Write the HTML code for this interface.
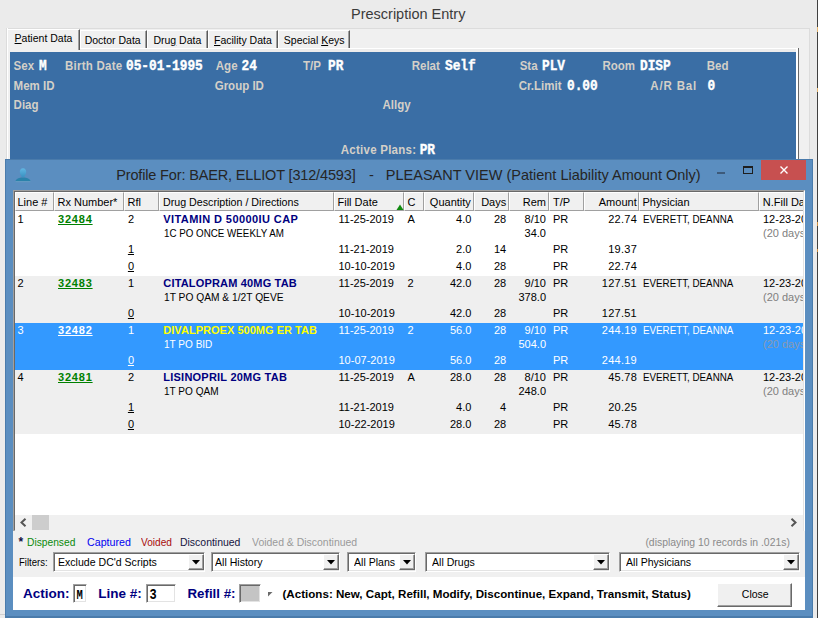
<!DOCTYPE html><html><head><meta charset="utf-8"><style>
html,body{margin:0;padding:0;}
body{width:818px;height:618px;overflow:hidden;position:relative;background:#ebebeb;font-family:"Liberation Sans",sans-serif;}
div{box-sizing:border-box;}
u{text-decoration:underline;text-underline-offset:1px;}
</style></head><body>
<div style="position:absolute;left:351px;top:7.43px;font-family:'Liberation Sans', sans-serif;font-size:14.5px;line-height:14.5px;color:#3b3b3b;font-weight:400;white-space:pre;">Prescription Entry</div>
<div style="position:absolute;left:817px;top:0px;width:1px;height:618px;background:#404040;"></div>
<div style="position:absolute;left:817px;top:27px;width:1px;height:5px;background:#e8b870;"></div>
<div style="position:absolute;left:817px;top:88px;width:1px;height:4px;background:#e8b870;"></div>
<div style="position:absolute;left:817px;top:222px;width:1px;height:4px;background:#d09040;"></div>
<div style="position:absolute;left:817px;top:249px;width:1px;height:3px;background:#d09040;"></div>
<div style="position:absolute;left:7px;top:28px;width:803px;height:590px;background:#f0f0f0;border-top:1px solid #dcdcdc;border-right:1px solid #dcdcdc;"></div>
<div style="position:absolute;left:6px;top:28px;width:2px;height:590px;background:#f0f0f0;border-left:1px solid #dcdcdc;border-right:1px solid #fff;"></div>
<div style="position:absolute;left:80px;top:48px;width:718px;height:1px;background:#ffffff;"></div>
<div style="position:absolute;left:80px;top:30px;width:67px;height:18px;background:#f0f0f0;border-left:1px solid #fff;border-top:1px solid #fff;border-right:1px solid #5a5a5a;box-shadow:inset -1px 0 0 #a0a0a0;"></div>
<div style="position:absolute;left:84.7px;top:35.11px;font-family:'Liberation Sans', sans-serif;font-size:10.5px;line-height:10.5px;color:#000;font-weight:400;white-space:pre;">Doctor Data</div>
<div style="position:absolute;left:147px;top:30px;width:61px;height:18px;background:#f0f0f0;border-left:1px solid #fff;border-top:1px solid #fff;border-right:1px solid #5a5a5a;box-shadow:inset -1px 0 0 #a0a0a0;"></div>
<div style="position:absolute;left:153.4px;top:35.11px;font-family:'Liberation Sans', sans-serif;font-size:10.5px;line-height:10.5px;color:#000;font-weight:400;white-space:pre;">Dru<u>g</u> Data</div>
<div style="position:absolute;left:208px;top:30px;width:70px;height:18px;background:#f0f0f0;border-left:1px solid #fff;border-top:1px solid #fff;border-right:1px solid #5a5a5a;box-shadow:inset -1px 0 0 #a0a0a0;"></div>
<div style="position:absolute;left:214px;top:35.11px;font-family:'Liberation Sans', sans-serif;font-size:10.5px;line-height:10.5px;color:#000;font-weight:400;white-space:pre;"><u>F</u>acility Data</div>
<div style="position:absolute;left:278px;top:30px;width:72px;height:18px;background:#f0f0f0;border-left:1px solid #fff;border-top:1px solid #fff;border-right:1px solid #5a5a5a;box-shadow:inset -1px 0 0 #a0a0a0;"></div>
<div style="position:absolute;left:283.8px;top:35.11px;font-family:'Liberation Sans', sans-serif;font-size:10.5px;line-height:10.5px;color:#000;font-weight:400;white-space:pre;">Special <u>K</u>eys</div>
<div style="position:absolute;left:7px;top:29px;width:73px;height:21px;background:#f0f0f0;border-left:1px solid #fff;border-top:1px solid #fff;border-right:1px solid #5a5a5a;box-shadow:inset -1px 0 0 #a0a0a0;"></div>
<div style="position:absolute;left:14.6px;top:32.91px;font-family:'Liberation Sans', sans-serif;font-size:10.5px;line-height:10.5px;color:#000;font-weight:400;white-space:pre;"><u>P</u>atient Data</div>
<div style="position:absolute;left:10px;top:52px;width:786px;height:120px;background:#3a6ea5;"></div>
<div style="position:absolute;left:80px;top:49px;width:718px;height:3px;background:#ececec;"></div>
<div style="position:absolute;left:796px;top:49px;width:2px;height:120px;background:#ffffff;"></div>
<div style="position:absolute;left:798px;top:48px;width:1px;height:120px;background:#696969;"></div>
<div style="position:absolute;left:13.6px;top:60.97px;font-family:'Liberation Sans', sans-serif;font-size:11.5px;line-height:11.5px;color:#d4d0c8;font-weight:700;white-space:pre;transform:scale(1,1.1);transform-origin:left 84.7%;">Sex</div>
<div style="position:absolute;left:39px;top:61.17px;font-family:'Liberation Mono', monospace;font-size:12.8px;line-height:12.8px;color:#fff;font-weight:700;white-space:pre;transform:scale(1,1.1);transform-origin:left 69.0%;-webkit-text-stroke:0.35px #fff;">M</div>
<div style="position:absolute;left:65px;top:60.97px;font-family:'Liberation Sans', sans-serif;font-size:11.5px;line-height:11.5px;color:#d4d0c8;font-weight:700;white-space:pre;letter-spacing:0.25px;transform:scale(1,1.1);transform-origin:left 84.7%;">Birth Date</div>
<div style="position:absolute;left:126px;top:61.17px;font-family:'Liberation Mono', monospace;font-size:12.8px;line-height:12.8px;color:#fff;font-weight:700;white-space:pre;transform:scale(1,1.1);transform-origin:left 69.0%;-webkit-text-stroke:0.35px #fff;">05-01-1995</div>
<div style="position:absolute;left:215.8px;top:60.97px;font-family:'Liberation Sans', sans-serif;font-size:11.5px;line-height:11.5px;color:#d4d0c8;font-weight:700;white-space:pre;transform:scale(1,1.1);transform-origin:left 84.7%;">Age</div>
<div style="position:absolute;left:241.5px;top:61.17px;font-family:'Liberation Mono', monospace;font-size:12.8px;line-height:12.8px;color:#fff;font-weight:700;white-space:pre;transform:scale(1,1.1);transform-origin:left 69.0%;-webkit-text-stroke:0.35px #fff;">24</div>
<div style="position:absolute;left:303px;top:60.97px;font-family:'Liberation Sans', sans-serif;font-size:11.5px;line-height:11.5px;color:#d4d0c8;font-weight:700;white-space:pre;transform:scale(1,1.1);transform-origin:left 84.7%;">T/P</div>
<div style="position:absolute;left:328px;top:61.17px;font-family:'Liberation Mono', monospace;font-size:12.8px;line-height:12.8px;color:#fff;font-weight:700;white-space:pre;transform:scale(1,1.1);transform-origin:left 69.0%;-webkit-text-stroke:0.35px #fff;">PR</div>
<div style="position:absolute;left:411.7px;top:60.97px;font-family:'Liberation Sans', sans-serif;font-size:11.5px;line-height:11.5px;color:#d4d0c8;font-weight:700;white-space:pre;transform:scale(1,1.1);transform-origin:left 84.7%;">Relat</div>
<div style="position:absolute;left:445px;top:61.17px;font-family:'Liberation Mono', monospace;font-size:12.8px;line-height:12.8px;color:#fff;font-weight:700;white-space:pre;transform:scale(1,1.1);transform-origin:left 69.0%;-webkit-text-stroke:0.35px #fff;">Self</div>
<div style="position:absolute;left:519.7px;top:60.97px;font-family:'Liberation Sans', sans-serif;font-size:11.5px;line-height:11.5px;color:#d4d0c8;font-weight:700;white-space:pre;transform:scale(1,1.1);transform-origin:left 84.7%;">Sta</div>
<div style="position:absolute;left:542px;top:61.17px;font-family:'Liberation Mono', monospace;font-size:12.8px;line-height:12.8px;color:#fff;font-weight:700;white-space:pre;transform:scale(1,1.1);transform-origin:left 69.0%;-webkit-text-stroke:0.35px #fff;">PLV</div>
<div style="position:absolute;left:602.5px;top:60.97px;font-family:'Liberation Sans', sans-serif;font-size:11.5px;line-height:11.5px;color:#d4d0c8;font-weight:700;white-space:pre;transform:scale(1,1.1);transform-origin:left 84.7%;">Room</div>
<div style="position:absolute;left:640px;top:61.17px;font-family:'Liberation Mono', monospace;font-size:12.8px;line-height:12.8px;color:#fff;font-weight:700;white-space:pre;transform:scale(1,1.1);transform-origin:left 69.0%;-webkit-text-stroke:0.35px #fff;">DISP</div>
<div style="position:absolute;left:706.7px;top:60.97px;font-family:'Liberation Sans', sans-serif;font-size:11.5px;line-height:11.5px;color:#d4d0c8;font-weight:700;white-space:pre;transform:scale(1,1.1);transform-origin:left 84.7%;">Bed</div>
<div style="position:absolute;left:13.6px;top:81.27px;font-family:'Liberation Sans', sans-serif;font-size:11.5px;line-height:11.5px;color:#d4d0c8;font-weight:700;white-space:pre;transform:scale(1,1.1);transform-origin:left 84.7%;">Mem ID</div>
<div style="position:absolute;left:214.7px;top:81.27px;font-family:'Liberation Sans', sans-serif;font-size:11.5px;line-height:11.5px;color:#d4d0c8;font-weight:700;white-space:pre;transform:scale(1,1.1);transform-origin:left 84.7%;">Group ID</div>
<div style="position:absolute;left:518.7px;top:81.27px;font-family:'Liberation Sans', sans-serif;font-size:11.5px;line-height:11.5px;color:#d4d0c8;font-weight:700;white-space:pre;transform:scale(1,1.1);transform-origin:left 84.7%;">Cr.Limit</div>
<div style="position:absolute;left:567px;top:81.47px;font-family:'Liberation Mono', monospace;font-size:12.8px;line-height:12.8px;color:#fff;font-weight:700;white-space:pre;transform:scale(1,1.1);transform-origin:left 69.0%;-webkit-text-stroke:0.35px #fff;">0.00</div>
<div style="position:absolute;left:650.3px;top:81.27px;font-family:'Liberation Sans', sans-serif;font-size:11.5px;line-height:11.5px;color:#d4d0c8;font-weight:700;white-space:pre;letter-spacing:0.85px;transform:scale(1,1.1);transform-origin:left 84.7%;">A/R Bal</div>
<div style="position:absolute;left:707.5px;top:81.47px;font-family:'Liberation Mono', monospace;font-size:12.8px;line-height:12.8px;color:#fff;font-weight:700;white-space:pre;transform:scale(1,1.1);transform-origin:left 69.0%;-webkit-text-stroke:0.35px #fff;">0</div>
<div style="position:absolute;left:13.6px;top:99.97px;font-family:'Liberation Sans', sans-serif;font-size:11.5px;line-height:11.5px;color:#d4d0c8;font-weight:700;white-space:pre;transform:scale(1,1.1);transform-origin:left 84.7%;">Diag</div>
<div style="position:absolute;left:382.5px;top:99.97px;font-family:'Liberation Sans', sans-serif;font-size:11.5px;line-height:11.5px;color:#d4d0c8;font-weight:700;white-space:pre;transform:scale(1,1.1);transform-origin:left 84.7%;">Allgy</div>
<div style="position:absolute;left:340.8px;top:145.47px;font-family:'Liberation Sans', sans-serif;font-size:11.5px;line-height:11.5px;color:#d4d0c8;font-weight:700;white-space:pre;letter-spacing:0.25px;transform:scale(1,1.1);transform-origin:left 84.7%;">Active Plans:</div>
<div style="position:absolute;left:419.7px;top:145.37px;font-family:'Liberation Mono', monospace;font-size:12.8px;line-height:12.8px;color:#fff;font-weight:700;white-space:pre;transform:scale(1,1.1);transform-origin:left 69.0%;-webkit-text-stroke:0.35px #fff;">PR</div>
<div style="position:absolute;left:5px;top:159px;width:808px;height:459px;background:#5b8ec0;border:1px solid #4a7bab;border-bottom:2px solid #4a7bab;"></div>
<svg style="position:absolute;left:14px;top:166px" width="18" height="17" viewBox="0 0 18 17"><defs><linearGradient id="hg" x1="0" y1="0" x2="0" y2="1"><stop offset="0" stop-color="#62b6e2"/><stop offset="1" stop-color="#3a92c2"/></linearGradient></defs><path d="M9 2.2 C11.3 2.2 12.2 4 12.2 5.8 C12.2 8 10.8 9.6 10.3 11 L7.7 11 C7.2 9.6 5.8 8 5.8 5.8 C5.8 4 6.7 2.2 9 2.2 Z" fill="url(#hg)"/><path d="M1.3 15.3 C2 12.6 5 11.6 9 11.4 C13 11.6 16 12.6 16.7 15.3 Z" fill="#2a82aa"/><rect x="1.5" y="15.3" width="15" height="0.8" fill="#7aa6c8" opacity="0.7"/></svg>
<div style="position:absolute;left:116.2px;top:167.73px;font-family:'Liberation Sans', sans-serif;font-size:14.5px;line-height:14.5px;color:#252525;font-weight:400;white-space:pre;letter-spacing:-0.15px;">Profile For: BAER, ELLIOT [312/4593]</div>
<div style="position:absolute;left:369px;top:167.73px;font-family:'Liberation Sans', sans-serif;font-size:14.5px;line-height:14.5px;color:#252525;font-weight:400;white-space:pre;">-</div>
<div style="position:absolute;left:385.8px;top:167.73px;font-family:'Liberation Sans', sans-serif;font-size:14.5px;line-height:14.5px;color:#252525;font-weight:400;white-space:pre;">PLEASANT VIEW (Patient Liability Amount Only)</div>
<div style="position:absolute;left:717px;top:172px;width:8px;height:2px;background:#3d5a7a;"></div>
<div style="position:absolute;left:743px;top:166px;width:10px;height:8px;background:transparent;border:1px solid #1e1e1e;border-top:2px solid #1e1e1e;"></div>
<div style="position:absolute;left:761px;top:160px;width:45px;height:20px;background:#c75050;"></div>
<svg style="position:absolute;left:779px;top:165px" width="10" height="10" viewBox="0 0 10 10"><path d="M1.5 1.5 L8.5 8.5 M8.5 1.5 L1.5 8.5" stroke="#fff" stroke-width="1.4"/></svg>
<div style="position:absolute;left:13px;top:190px;width:792px;height:420px;background:#ffffff;"></div>
<div style="position:absolute;left:13px;top:190px;width:792px;height:342px;background:transparent;border-top:1px solid #a0a0a0;border-left:1px solid #a0a0a0;border-right:1px solid #fff;border-bottom:1px solid #fff;"></div>
<div style="position:absolute;left:14px;top:191px;width:790px;height:340px;background:transparent;border-top:1px solid #696969;border-left:1px solid #696969;border-right:1px solid #e3e3e3;border-bottom:1px solid #e3e3e3;"></div>
<div style="position:absolute;left:15px;top:192px;width:39px;height:19px;background:#f0f0f0;border-left:1px solid #fff;border-top:1px solid #fff;border-right:1px solid #a0a0a0;border-bottom:1px solid #a0a0a0;"></div>
<div style="position:absolute;left:54px;top:192px;width:70px;height:19px;background:#f0f0f0;border-left:1px solid #fff;border-top:1px solid #fff;border-right:1px solid #a0a0a0;border-bottom:1px solid #a0a0a0;"></div>
<div style="position:absolute;left:124px;top:192px;width:35px;height:19px;background:#f0f0f0;border-left:1px solid #fff;border-top:1px solid #fff;border-right:1px solid #a0a0a0;border-bottom:1px solid #a0a0a0;"></div>
<div style="position:absolute;left:159px;top:192px;width:175px;height:19px;background:#f0f0f0;border-left:1px solid #fff;border-top:1px solid #fff;border-right:1px solid #a0a0a0;border-bottom:1px solid #a0a0a0;"></div>
<div style="position:absolute;left:334px;top:192px;width:70px;height:19px;background:#f0f0f0;border-left:1px solid #fff;border-top:1px solid #fff;border-right:1px solid #a0a0a0;border-bottom:1px solid #a0a0a0;"></div>
<div style="position:absolute;left:404px;top:192px;width:20px;height:19px;background:#f0f0f0;border-left:1px solid #fff;border-top:1px solid #fff;border-right:1px solid #a0a0a0;border-bottom:1px solid #a0a0a0;"></div>
<div style="position:absolute;left:424px;top:192px;width:50px;height:19px;background:#f0f0f0;border-left:1px solid #fff;border-top:1px solid #fff;border-right:1px solid #a0a0a0;border-bottom:1px solid #a0a0a0;"></div>
<div style="position:absolute;left:474px;top:192px;width:35px;height:19px;background:#f0f0f0;border-left:1px solid #fff;border-top:1px solid #fff;border-right:1px solid #a0a0a0;border-bottom:1px solid #a0a0a0;"></div>
<div style="position:absolute;left:509px;top:192px;width:40px;height:19px;background:#f0f0f0;border-left:1px solid #fff;border-top:1px solid #fff;border-right:1px solid #a0a0a0;border-bottom:1px solid #a0a0a0;"></div>
<div style="position:absolute;left:549px;top:192px;width:35px;height:19px;background:#f0f0f0;border-left:1px solid #fff;border-top:1px solid #fff;border-right:1px solid #a0a0a0;border-bottom:1px solid #a0a0a0;"></div>
<div style="position:absolute;left:584px;top:192px;width:55px;height:19px;background:#f0f0f0;border-left:1px solid #fff;border-top:1px solid #fff;border-right:1px solid #a0a0a0;border-bottom:1px solid #a0a0a0;"></div>
<div style="position:absolute;left:639px;top:192px;width:120px;height:19px;background:#f0f0f0;border-left:1px solid #fff;border-top:1px solid #fff;border-right:1px solid #a0a0a0;border-bottom:1px solid #a0a0a0;"></div>
<div style="position:absolute;left:759px;top:192px;width:44px;height:19px;background:#f0f0f0;border-left:1px solid #fff;border-top:1px solid #fff;border-bottom:1px solid #a0a0a0;"></div>
<div style="position:absolute;left:0;top:0;width:818px;height:618px;clip-path:inset(0 15px 0 0)">
<div style="position:absolute;left:17.5px;top:196.69px;font-family:'Liberation Sans', sans-serif;font-size:11px;line-height:11px;color:#000;font-weight:400;white-space:pre;">Line #</div>
<div style="position:absolute;left:57.5px;top:196.69px;font-family:'Liberation Sans', sans-serif;font-size:11px;line-height:11px;color:#000;font-weight:400;white-space:pre;">Rx Number*</div>
<div style="position:absolute;left:127.5px;top:196.69px;font-family:'Liberation Sans', sans-serif;font-size:11px;line-height:11px;color:#000;font-weight:400;white-space:pre;">Rfl</div>
<div style="position:absolute;left:162.5px;top:196.69px;font-family:'Liberation Sans', sans-serif;font-size:11px;line-height:11px;color:#000;font-weight:400;white-space:pre;transform:scale(0.97,1);transform-origin:left 84.7%;">Drug Description / Directions</div>
<div style="position:absolute;left:337.5px;top:196.69px;font-family:'Liberation Sans', sans-serif;font-size:11px;line-height:11px;color:#000;font-weight:400;white-space:pre;">Fill Date</div>
<div style="position:absolute;left:407.5px;top:196.69px;font-family:'Liberation Sans', sans-serif;font-size:11px;line-height:11px;color:#000;font-weight:400;white-space:pre;">C</div>
<div style="position:absolute;right:347.2px;top:196.69px;font-family:'Liberation Sans', sans-serif;font-size:11px;line-height:11px;color:#000;font-weight:400;white-space:pre;">Quantity</div>
<div style="position:absolute;right:311.8px;top:196.69px;font-family:'Liberation Sans', sans-serif;font-size:11px;line-height:11px;color:#000;font-weight:400;white-space:pre;">Days</div>
<div style="position:absolute;right:272px;top:196.69px;font-family:'Liberation Sans', sans-serif;font-size:11px;line-height:11px;color:#000;font-weight:400;white-space:pre;">Rem</div>
<div style="position:absolute;left:553px;top:196.69px;font-family:'Liberation Sans', sans-serif;font-size:11px;line-height:11px;color:#000;font-weight:400;white-space:pre;">T/P</div>
<div style="position:absolute;right:181.29999999999995px;top:196.69px;font-family:'Liberation Sans', sans-serif;font-size:11px;line-height:11px;color:#000;font-weight:400;white-space:pre;">Amount</div>
<div style="position:absolute;left:642.5px;top:196.69px;font-family:'Liberation Sans', sans-serif;font-size:11px;line-height:11px;color:#000;font-weight:400;white-space:pre;">Physician</div>
<div style="position:absolute;left:762.8px;top:196.69px;font-family:'Liberation Sans', sans-serif;font-size:11px;line-height:11px;color:#000;font-weight:400;white-space:pre;">N.Fill Date</div>
</div>
<svg style="position:absolute;left:396px;top:204px" width="8" height="6" viewBox="0 0 8 6"><path d="M0.5 6 L4 0.5 L7.5 6 Z" fill="#108a10"/></svg>
<div style="position:absolute;left:15px;top:211px;width:788px;height:304px;overflow:hidden">
</div>
<div style="position:absolute;left:15px;top:211px;width:788px;height:65px;background:#ffffff;"></div>
<div style="position:absolute;left:17.5px;top:213.69px;font-family:'Liberation Sans', sans-serif;font-size:11px;line-height:11px;color:#000;font-weight:400;white-space:pre;">1</div>
<div style="position:absolute;left:58px;top:213.69px;font-family:'Liberation Sans', sans-serif;font-size:11px;line-height:11px;color:#008000;font-weight:700;white-space:pre;letter-spacing:0.8px;"><u>32484</u></div>
<div style="position:absolute;left:127.9px;top:213.69px;font-family:'Liberation Sans', sans-serif;font-size:11px;line-height:11px;color:#000;font-weight:400;white-space:pre;">2</div>
<div style="position:absolute;left:163.3px;top:213.69px;font-family:'Liberation Sans', sans-serif;font-size:11px;line-height:11px;color:#000080;font-weight:700;white-space:pre;letter-spacing:0.41px;">VITAMIN D 50000IU CAP</div>
<div style="position:absolute;left:163.5px;top:227.69px;font-family:'Liberation Sans', sans-serif;font-size:11px;line-height:11px;color:#000;font-weight:400;white-space:pre;transform:scale(0.89,1);transform-origin:left 84.7%;">1C PO ONCE WEEKLY AM</div>
<div style="position:absolute;left:338.5px;top:213.69px;font-family:'Liberation Sans', sans-serif;font-size:11px;line-height:11px;color:#000;font-weight:400;white-space:pre;">11-25-2019</div>
<div style="position:absolute;left:407.5px;top:213.69px;font-family:'Liberation Sans', sans-serif;font-size:11px;line-height:11px;color:#000;font-weight:400;white-space:pre;">A</div>
<div style="position:absolute;right:346.7px;top:213.69px;font-family:'Liberation Sans', sans-serif;font-size:11px;line-height:11px;color:#000;font-weight:400;white-space:pre;">4.0</div>
<div style="position:absolute;right:311.8px;top:213.69px;font-family:'Liberation Sans', sans-serif;font-size:11px;line-height:11px;color:#000;font-weight:400;white-space:pre;">28</div>
<div style="position:absolute;right:272px;top:213.69px;font-family:'Liberation Sans', sans-serif;font-size:11px;line-height:11px;color:#000;font-weight:400;white-space:pre;">8/10</div>
<div style="position:absolute;right:272px;top:227.69px;font-family:'Liberation Sans', sans-serif;font-size:11px;line-height:11px;color:#000;font-weight:400;white-space:pre;">34.0</div>
<div style="position:absolute;left:553px;top:213.69px;font-family:'Liberation Sans', sans-serif;font-size:11px;line-height:11px;color:#000;font-weight:400;white-space:pre;">PR</div>
<div style="position:absolute;right:181.0px;top:213.69px;font-family:'Liberation Sans', sans-serif;font-size:11px;line-height:11px;color:#000;font-weight:400;white-space:pre;letter-spacing:0.25px;">22.74</div>
<div style="position:absolute;left:642.5px;top:213.69px;font-family:'Liberation Sans', sans-serif;font-size:11px;line-height:11px;color:#000;font-weight:400;white-space:pre;transform:scale(0.89,1);transform-origin:left 84.7%;">EVERETT, DEANNA</div>
<div style="position:absolute;left:759px;top:211px;width:44px;height:65px;overflow:hidden">
<div style="position:absolute;left:4px;top:2.69px;font-size:11px;line-height:11px;white-space:pre;color:#000">12-23-2019</div>
<div style="position:absolute;left:4px;top:16.69px;font-size:11px;line-height:11px;white-space:pre;color:#808080">(20 days)</div>
</div>
<div style="position:absolute;left:127.9px;top:243.69px;font-family:'Liberation Sans', sans-serif;font-size:11px;line-height:11px;color:#000;font-weight:400;white-space:pre;"><u>1</u></div>
<div style="position:absolute;left:338.5px;top:243.69px;font-family:'Liberation Sans', sans-serif;font-size:11px;line-height:11px;color:#000;font-weight:400;white-space:pre;">11-21-2019</div>
<div style="position:absolute;right:346.7px;top:243.69px;font-family:'Liberation Sans', sans-serif;font-size:11px;line-height:11px;color:#000;font-weight:400;white-space:pre;">2.0</div>
<div style="position:absolute;right:311.8px;top:243.69px;font-family:'Liberation Sans', sans-serif;font-size:11px;line-height:11px;color:#000;font-weight:400;white-space:pre;">14</div>
<div style="position:absolute;left:553px;top:243.69px;font-family:'Liberation Sans', sans-serif;font-size:11px;line-height:11px;color:#000;font-weight:400;white-space:pre;">PR</div>
<div style="position:absolute;right:181.0px;top:243.69px;font-family:'Liberation Sans', sans-serif;font-size:11px;line-height:11px;color:#000;font-weight:400;white-space:pre;letter-spacing:0.25px;">19.37</div>
<div style="position:absolute;left:127.9px;top:260.69px;font-family:'Liberation Sans', sans-serif;font-size:11px;line-height:11px;color:#000;font-weight:400;white-space:pre;"><u>0</u></div>
<div style="position:absolute;left:338.5px;top:260.69px;font-family:'Liberation Sans', sans-serif;font-size:11px;line-height:11px;color:#000;font-weight:400;white-space:pre;">10-10-2019</div>
<div style="position:absolute;right:346.7px;top:260.69px;font-family:'Liberation Sans', sans-serif;font-size:11px;line-height:11px;color:#000;font-weight:400;white-space:pre;">4.0</div>
<div style="position:absolute;right:311.8px;top:260.69px;font-family:'Liberation Sans', sans-serif;font-size:11px;line-height:11px;color:#000;font-weight:400;white-space:pre;">28</div>
<div style="position:absolute;left:553px;top:260.69px;font-family:'Liberation Sans', sans-serif;font-size:11px;line-height:11px;color:#000;font-weight:400;white-space:pre;">PR</div>
<div style="position:absolute;right:181.0px;top:260.69px;font-family:'Liberation Sans', sans-serif;font-size:11px;line-height:11px;color:#000;font-weight:400;white-space:pre;letter-spacing:0.25px;">22.74</div>
<div style="position:absolute;left:15px;top:276px;width:788px;height:47px;background:#efefef;"></div>
<div style="position:absolute;left:17.5px;top:277.69px;font-family:'Liberation Sans', sans-serif;font-size:11px;line-height:11px;color:#000;font-weight:400;white-space:pre;">2</div>
<div style="position:absolute;left:58px;top:277.69px;font-family:'Liberation Sans', sans-serif;font-size:11px;line-height:11px;color:#008000;font-weight:700;white-space:pre;letter-spacing:0.8px;"><u>32483</u></div>
<div style="position:absolute;left:127.9px;top:277.69px;font-family:'Liberation Sans', sans-serif;font-size:11px;line-height:11px;color:#000;font-weight:400;white-space:pre;">1</div>
<div style="position:absolute;left:163.3px;top:277.69px;font-family:'Liberation Sans', sans-serif;font-size:11px;line-height:11px;color:#000080;font-weight:700;white-space:pre;letter-spacing:0.17px;">CITALOPRAM 40MG TAB</div>
<div style="position:absolute;left:163.5px;top:291.69px;font-family:'Liberation Sans', sans-serif;font-size:11px;line-height:11px;color:#000;font-weight:400;white-space:pre;transform:scale(0.93,1);transform-origin:left 84.7%;">1T PO QAM &amp; 1/2T QEVE</div>
<div style="position:absolute;left:338.5px;top:277.69px;font-family:'Liberation Sans', sans-serif;font-size:11px;line-height:11px;color:#000;font-weight:400;white-space:pre;">11-25-2019</div>
<div style="position:absolute;left:407.5px;top:277.69px;font-family:'Liberation Sans', sans-serif;font-size:11px;line-height:11px;color:#000;font-weight:400;white-space:pre;">2</div>
<div style="position:absolute;right:346.7px;top:277.69px;font-family:'Liberation Sans', sans-serif;font-size:11px;line-height:11px;color:#000;font-weight:400;white-space:pre;">42.0</div>
<div style="position:absolute;right:311.8px;top:277.69px;font-family:'Liberation Sans', sans-serif;font-size:11px;line-height:11px;color:#000;font-weight:400;white-space:pre;">28</div>
<div style="position:absolute;right:272px;top:277.69px;font-family:'Liberation Sans', sans-serif;font-size:11px;line-height:11px;color:#000;font-weight:400;white-space:pre;">9/10</div>
<div style="position:absolute;right:272px;top:291.69px;font-family:'Liberation Sans', sans-serif;font-size:11px;line-height:11px;color:#000;font-weight:400;white-space:pre;">378.0</div>
<div style="position:absolute;left:553px;top:277.69px;font-family:'Liberation Sans', sans-serif;font-size:11px;line-height:11px;color:#000;font-weight:400;white-space:pre;">PR</div>
<div style="position:absolute;right:181.0px;top:277.69px;font-family:'Liberation Sans', sans-serif;font-size:11px;line-height:11px;color:#000;font-weight:400;white-space:pre;letter-spacing:0.25px;">127.51</div>
<div style="position:absolute;left:642.5px;top:277.69px;font-family:'Liberation Sans', sans-serif;font-size:11px;line-height:11px;color:#000;font-weight:400;white-space:pre;transform:scale(0.89,1);transform-origin:left 84.7%;">EVERETT, DEANNA</div>
<div style="position:absolute;left:759px;top:276px;width:44px;height:47px;overflow:hidden">
<div style="position:absolute;left:4px;top:1.69px;font-size:11px;line-height:11px;white-space:pre;color:#000">12-23-2019</div>
<div style="position:absolute;left:4px;top:15.69px;font-size:11px;line-height:11px;white-space:pre;color:#808080">(20 days)</div>
</div>
<div style="position:absolute;left:127.9px;top:308.19px;font-family:'Liberation Sans', sans-serif;font-size:11px;line-height:11px;color:#000;font-weight:400;white-space:pre;"><u>0</u></div>
<div style="position:absolute;left:338.5px;top:308.19px;font-family:'Liberation Sans', sans-serif;font-size:11px;line-height:11px;color:#000;font-weight:400;white-space:pre;">10-10-2019</div>
<div style="position:absolute;right:346.7px;top:308.19px;font-family:'Liberation Sans', sans-serif;font-size:11px;line-height:11px;color:#000;font-weight:400;white-space:pre;">42.0</div>
<div style="position:absolute;right:311.8px;top:308.19px;font-family:'Liberation Sans', sans-serif;font-size:11px;line-height:11px;color:#000;font-weight:400;white-space:pre;">28</div>
<div style="position:absolute;left:553px;top:308.19px;font-family:'Liberation Sans', sans-serif;font-size:11px;line-height:11px;color:#000;font-weight:400;white-space:pre;">PR</div>
<div style="position:absolute;right:181.0px;top:308.19px;font-family:'Liberation Sans', sans-serif;font-size:11px;line-height:11px;color:#000;font-weight:400;white-space:pre;letter-spacing:0.25px;">127.51</div>
<div style="position:absolute;left:15px;top:323px;width:788px;height:47px;background:#3399ff;"></div>
<div style="position:absolute;left:17.5px;top:324.89px;font-family:'Liberation Sans', sans-serif;font-size:11px;line-height:11px;color:#fff;font-weight:400;white-space:pre;">3</div>
<div style="position:absolute;left:58px;top:324.89px;font-family:'Liberation Sans', sans-serif;font-size:11px;line-height:11px;color:#fff;font-weight:700;white-space:pre;letter-spacing:0.8px;"><u>32482</u></div>
<div style="position:absolute;left:127.9px;top:324.89px;font-family:'Liberation Sans', sans-serif;font-size:11px;line-height:11px;color:#fff;font-weight:400;white-space:pre;">1</div>
<div style="position:absolute;left:163.3px;top:324.89px;font-family:'Liberation Sans', sans-serif;font-size:11px;line-height:11px;color:#ffff00;font-weight:700;white-space:pre;letter-spacing:0.03px;">DIVALPROEX 500MG ER TAB</div>
<div style="position:absolute;left:163.5px;top:338.89px;font-family:'Liberation Sans', sans-serif;font-size:11px;line-height:11px;color:#fff;font-weight:400;white-space:pre;transform:scale(0.913,1);transform-origin:left 84.7%;">1T PO BID</div>
<div style="position:absolute;left:338.5px;top:324.89px;font-family:'Liberation Sans', sans-serif;font-size:11px;line-height:11px;color:#fff;font-weight:400;white-space:pre;">11-25-2019</div>
<div style="position:absolute;left:407.5px;top:324.89px;font-family:'Liberation Sans', sans-serif;font-size:11px;line-height:11px;color:#fff;font-weight:400;white-space:pre;">2</div>
<div style="position:absolute;right:346.7px;top:324.89px;font-family:'Liberation Sans', sans-serif;font-size:11px;line-height:11px;color:#fff;font-weight:400;white-space:pre;">56.0</div>
<div style="position:absolute;right:311.8px;top:324.89px;font-family:'Liberation Sans', sans-serif;font-size:11px;line-height:11px;color:#fff;font-weight:400;white-space:pre;">28</div>
<div style="position:absolute;right:272px;top:324.89px;font-family:'Liberation Sans', sans-serif;font-size:11px;line-height:11px;color:#fff;font-weight:400;white-space:pre;">9/10</div>
<div style="position:absolute;right:272px;top:338.89px;font-family:'Liberation Sans', sans-serif;font-size:11px;line-height:11px;color:#fff;font-weight:400;white-space:pre;">504.0</div>
<div style="position:absolute;left:553px;top:324.89px;font-family:'Liberation Sans', sans-serif;font-size:11px;line-height:11px;color:#fff;font-weight:400;white-space:pre;">PR</div>
<div style="position:absolute;right:181.0px;top:324.89px;font-family:'Liberation Sans', sans-serif;font-size:11px;line-height:11px;color:#fff;font-weight:400;white-space:pre;letter-spacing:0.25px;">244.19</div>
<div style="position:absolute;left:642.5px;top:324.89px;font-family:'Liberation Sans', sans-serif;font-size:11px;line-height:11px;color:#fff;font-weight:400;white-space:pre;transform:scale(0.89,1);transform-origin:left 84.7%;">EVERETT, DEANNA</div>
<div style="position:absolute;left:759px;top:323px;width:44px;height:47px;overflow:hidden">
<div style="position:absolute;left:4px;top:1.89px;font-size:11px;line-height:11px;white-space:pre;color:#fff">12-23-2019</div>
<div style="position:absolute;left:4px;top:15.89px;font-size:11px;line-height:11px;white-space:pre;color:#8a9ab0">(20 days)</div>
</div>
<div style="position:absolute;left:127.9px;top:355.39px;font-family:'Liberation Sans', sans-serif;font-size:11px;line-height:11px;color:#fff;font-weight:400;white-space:pre;"><u>0</u></div>
<div style="position:absolute;left:338.5px;top:355.39px;font-family:'Liberation Sans', sans-serif;font-size:11px;line-height:11px;color:#fff;font-weight:400;white-space:pre;">10-07-2019</div>
<div style="position:absolute;right:346.7px;top:355.39px;font-family:'Liberation Sans', sans-serif;font-size:11px;line-height:11px;color:#fff;font-weight:400;white-space:pre;">56.0</div>
<div style="position:absolute;right:311.8px;top:355.39px;font-family:'Liberation Sans', sans-serif;font-size:11px;line-height:11px;color:#fff;font-weight:400;white-space:pre;">28</div>
<div style="position:absolute;left:553px;top:355.39px;font-family:'Liberation Sans', sans-serif;font-size:11px;line-height:11px;color:#fff;font-weight:400;white-space:pre;">PR</div>
<div style="position:absolute;right:181.0px;top:355.39px;font-family:'Liberation Sans', sans-serif;font-size:11px;line-height:11px;color:#fff;font-weight:400;white-space:pre;letter-spacing:0.25px;">244.19</div>
<div style="position:absolute;left:15px;top:370px;width:788px;height:64px;background:#efefef;"></div>
<div style="position:absolute;left:17.5px;top:371.69px;font-family:'Liberation Sans', sans-serif;font-size:11px;line-height:11px;color:#000;font-weight:400;white-space:pre;">4</div>
<div style="position:absolute;left:58px;top:371.69px;font-family:'Liberation Sans', sans-serif;font-size:11px;line-height:11px;color:#008000;font-weight:700;white-space:pre;letter-spacing:0.8px;"><u>32481</u></div>
<div style="position:absolute;left:127.9px;top:371.69px;font-family:'Liberation Sans', sans-serif;font-size:11px;line-height:11px;color:#000;font-weight:400;white-space:pre;">2</div>
<div style="position:absolute;left:163.3px;top:371.69px;font-family:'Liberation Sans', sans-serif;font-size:11px;line-height:11px;color:#000080;font-weight:700;white-space:pre;letter-spacing:0.23px;">LISINOPRIL 20MG TAB</div>
<div style="position:absolute;left:163.5px;top:385.69px;font-family:'Liberation Sans', sans-serif;font-size:11px;line-height:11px;color:#000;font-weight:400;white-space:pre;transform:scale(0.915,1);transform-origin:left 84.7%;">1T PO QAM</div>
<div style="position:absolute;left:338.5px;top:371.69px;font-family:'Liberation Sans', sans-serif;font-size:11px;line-height:11px;color:#000;font-weight:400;white-space:pre;">11-25-2019</div>
<div style="position:absolute;left:407.5px;top:371.69px;font-family:'Liberation Sans', sans-serif;font-size:11px;line-height:11px;color:#000;font-weight:400;white-space:pre;">A</div>
<div style="position:absolute;right:346.7px;top:371.69px;font-family:'Liberation Sans', sans-serif;font-size:11px;line-height:11px;color:#000;font-weight:400;white-space:pre;">28.0</div>
<div style="position:absolute;right:311.8px;top:371.69px;font-family:'Liberation Sans', sans-serif;font-size:11px;line-height:11px;color:#000;font-weight:400;white-space:pre;">28</div>
<div style="position:absolute;right:272px;top:371.69px;font-family:'Liberation Sans', sans-serif;font-size:11px;line-height:11px;color:#000;font-weight:400;white-space:pre;">8/10</div>
<div style="position:absolute;right:272px;top:385.69px;font-family:'Liberation Sans', sans-serif;font-size:11px;line-height:11px;color:#000;font-weight:400;white-space:pre;">248.0</div>
<div style="position:absolute;left:553px;top:371.69px;font-family:'Liberation Sans', sans-serif;font-size:11px;line-height:11px;color:#000;font-weight:400;white-space:pre;">PR</div>
<div style="position:absolute;right:181.0px;top:371.69px;font-family:'Liberation Sans', sans-serif;font-size:11px;line-height:11px;color:#000;font-weight:400;white-space:pre;letter-spacing:0.25px;">45.78</div>
<div style="position:absolute;left:642.5px;top:371.69px;font-family:'Liberation Sans', sans-serif;font-size:11px;line-height:11px;color:#000;font-weight:400;white-space:pre;transform:scale(0.89,1);transform-origin:left 84.7%;">EVERETT, DEANNA</div>
<div style="position:absolute;left:759px;top:370px;width:44px;height:64px;overflow:hidden">
<div style="position:absolute;left:4px;top:1.69px;font-size:11px;line-height:11px;white-space:pre;color:#000">12-23-2019</div>
<div style="position:absolute;left:4px;top:15.69px;font-size:11px;line-height:11px;white-space:pre;color:#808080">(20 days)</div>
</div>
<div style="position:absolute;left:127.9px;top:401.69px;font-family:'Liberation Sans', sans-serif;font-size:11px;line-height:11px;color:#000;font-weight:400;white-space:pre;"><u>1</u></div>
<div style="position:absolute;left:338.5px;top:401.69px;font-family:'Liberation Sans', sans-serif;font-size:11px;line-height:11px;color:#000;font-weight:400;white-space:pre;">11-21-2019</div>
<div style="position:absolute;right:346.7px;top:401.69px;font-family:'Liberation Sans', sans-serif;font-size:11px;line-height:11px;color:#000;font-weight:400;white-space:pre;">4.0</div>
<div style="position:absolute;right:311.8px;top:401.69px;font-family:'Liberation Sans', sans-serif;font-size:11px;line-height:11px;color:#000;font-weight:400;white-space:pre;">4</div>
<div style="position:absolute;left:553px;top:401.69px;font-family:'Liberation Sans', sans-serif;font-size:11px;line-height:11px;color:#000;font-weight:400;white-space:pre;">PR</div>
<div style="position:absolute;right:181.0px;top:401.69px;font-family:'Liberation Sans', sans-serif;font-size:11px;line-height:11px;color:#000;font-weight:400;white-space:pre;letter-spacing:0.25px;">20.25</div>
<div style="position:absolute;left:127.9px;top:418.69px;font-family:'Liberation Sans', sans-serif;font-size:11px;line-height:11px;color:#000;font-weight:400;white-space:pre;"><u>0</u></div>
<div style="position:absolute;left:338.5px;top:418.69px;font-family:'Liberation Sans', sans-serif;font-size:11px;line-height:11px;color:#000;font-weight:400;white-space:pre;">10-22-2019</div>
<div style="position:absolute;right:346.7px;top:418.69px;font-family:'Liberation Sans', sans-serif;font-size:11px;line-height:11px;color:#000;font-weight:400;white-space:pre;">28.0</div>
<div style="position:absolute;right:311.8px;top:418.69px;font-family:'Liberation Sans', sans-serif;font-size:11px;line-height:11px;color:#000;font-weight:400;white-space:pre;">28</div>
<div style="position:absolute;left:553px;top:418.69px;font-family:'Liberation Sans', sans-serif;font-size:11px;line-height:11px;color:#000;font-weight:400;white-space:pre;">PR</div>
<div style="position:absolute;right:181.0px;top:418.69px;font-family:'Liberation Sans', sans-serif;font-size:11px;line-height:11px;color:#000;font-weight:400;white-space:pre;letter-spacing:0.25px;">45.78</div>
<div style="position:absolute;left:15px;top:515px;width:788px;height:16px;background:#f0f0f0;"></div>
<div style="position:absolute;left:32px;top:515px;width:17px;height:15px;background:#cdcdcd;"></div>
<svg style="position:absolute;left:18px;top:517px" width="10" height="11" viewBox="0 0 10 11"><path d="M7.5 1.8 L3.5 5.5 L7.5 9.2" stroke="#555" stroke-width="2" fill="none"/></svg>
<svg style="position:absolute;left:789px;top:517px" width="10" height="11" viewBox="0 0 10 11"><path d="M2.5 1.8 L6.5 5.5 L2.5 9.2" stroke="#555" stroke-width="2" fill="none"/></svg>
<div style="position:absolute;left:13px;top:531px;width:792px;height:46px;background:#f0f0f0;"></div>
<div style="position:absolute;left:18.5px;top:535.84px;font-family:'Liberation Sans', sans-serif;font-size:12px;line-height:12px;color:#101040;font-weight:700;white-space:pre;">*</div>
<div style="position:absolute;left:26.7px;top:537.39px;font-family:'Liberation Sans', sans-serif;font-size:11px;line-height:11px;color:#0a8a0a;font-weight:400;white-space:pre;transform:scale(0.93,1);transform-origin:left 84.7%;">Dispensed</div>
<div style="position:absolute;left:86.7px;top:537.39px;font-family:'Liberation Sans', sans-serif;font-size:11px;line-height:11px;color:#0000f0;font-weight:400;white-space:pre;transform:scale(0.97,1);transform-origin:left 84.7%;">Captured</div>
<div style="position:absolute;left:140.8px;top:537.39px;font-family:'Liberation Sans', sans-serif;font-size:11px;line-height:11px;color:#a80c0c;font-weight:400;white-space:pre;transform:scale(0.92,1);transform-origin:left 84.7%;">Voided</div>
<div style="position:absolute;left:179.7px;top:537.39px;font-family:'Liberation Sans', sans-serif;font-size:11px;line-height:11px;color:#141440;font-weight:400;white-space:pre;transform:scale(0.95,1);transform-origin:left 84.7%;">Discontinued</div>
<div style="position:absolute;left:251.7px;top:537.39px;font-family:'Liberation Sans', sans-serif;font-size:11px;line-height:11px;color:#9a9a9a;font-weight:400;white-space:pre;transform:scale(0.95,1);transform-origin:left 84.7%;">Voided &amp; Discontinued</div>
<div style="position:absolute;right:27.700000000000045px;top:537.39px;font-family:'Liberation Sans', sans-serif;font-size:11px;line-height:11px;color:#8a8a8a;font-weight:400;white-space:pre;transform:scale(0.945,1);transform-origin:right 84.7%;">(displaying 10 records in .021s)</div>
<div style="position:absolute;left:18.5px;top:557.49px;font-family:'Liberation Sans', sans-serif;font-size:11px;line-height:11px;color:#000;font-weight:400;white-space:pre;transform:scale(0.87,1);transform-origin:left 84.7%;">Filters:</div>
<div style="position:absolute;left:53px;top:552px;width:152px;height:20px;background:#fff;border-top:1px solid #a0a0a0;border-left:1px solid #a0a0a0;border-right:1px solid #fff;border-bottom:1px solid #fff;box-shadow:inset 1px 1px 0 #696969, inset -1px -1px 0 #e3e3e3;"></div>
<div style="position:absolute;left:188px;top:554px;width:16px;height:16px;background:#f0f0f0;border-top:1px solid #fff;border-left:1px solid #fff;border-right:1px solid #696969;border-bottom:1px solid #696969;box-shadow:inset -1px -1px 0 #a0a0a0;"></div>
<svg style="position:absolute;left:192px;top:560px" width="8" height="5" viewBox="0 0 8 5"><path d="M0 0 L8 0 L4 4.5 Z" fill="#000"/></svg>
<div style="position:absolute;left:57.5px;top:557.49px;font-family:'Liberation Sans', sans-serif;font-size:11px;line-height:11px;color:#000;font-weight:400;white-space:pre;transform:scale(0.96,1);transform-origin:left 84.7%;">Exclude DC'd Scripts</div>
<div style="position:absolute;left:211px;top:552px;width:129px;height:20px;background:#fff;border-top:1px solid #a0a0a0;border-left:1px solid #a0a0a0;border-right:1px solid #fff;border-bottom:1px solid #fff;box-shadow:inset 1px 1px 0 #696969, inset -1px -1px 0 #e3e3e3;"></div>
<div style="position:absolute;left:323px;top:554px;width:16px;height:16px;background:#f0f0f0;border-top:1px solid #fff;border-left:1px solid #fff;border-right:1px solid #696969;border-bottom:1px solid #696969;box-shadow:inset -1px -1px 0 #a0a0a0;"></div>
<svg style="position:absolute;left:327px;top:560px" width="8" height="5" viewBox="0 0 8 5"><path d="M0 0 L8 0 L4 4.5 Z" fill="#000"/></svg>
<div style="position:absolute;left:215px;top:557.49px;font-family:'Liberation Sans', sans-serif;font-size:11px;line-height:11px;color:#000;font-weight:400;white-space:pre;transform:scale(0.96,1);transform-origin:left 84.7%;">All History</div>
<div style="position:absolute;left:347px;top:552px;width:69px;height:20px;background:#fff;border-top:1px solid #a0a0a0;border-left:1px solid #a0a0a0;border-right:1px solid #fff;border-bottom:1px solid #fff;box-shadow:inset 1px 1px 0 #696969, inset -1px -1px 0 #e3e3e3;"></div>
<div style="position:absolute;left:399px;top:554px;width:16px;height:16px;background:#f0f0f0;border-top:1px solid #fff;border-left:1px solid #fff;border-right:1px solid #696969;border-bottom:1px solid #696969;box-shadow:inset -1px -1px 0 #a0a0a0;"></div>
<svg style="position:absolute;left:403px;top:560px" width="8" height="5" viewBox="0 0 8 5"><path d="M0 0 L8 0 L4 4.5 Z" fill="#000"/></svg>
<div style="position:absolute;left:354px;top:557.49px;font-family:'Liberation Sans', sans-serif;font-size:11px;line-height:11px;color:#000;font-weight:400;white-space:pre;transform:scale(0.96,1);transform-origin:left 84.7%;">All Plans</div>
<div style="position:absolute;left:425px;top:552px;width:185px;height:20px;background:#fff;border-top:1px solid #a0a0a0;border-left:1px solid #a0a0a0;border-right:1px solid #fff;border-bottom:1px solid #fff;box-shadow:inset 1px 1px 0 #696969, inset -1px -1px 0 #e3e3e3;"></div>
<div style="position:absolute;left:593px;top:554px;width:16px;height:16px;background:#f0f0f0;border-top:1px solid #fff;border-left:1px solid #fff;border-right:1px solid #696969;border-bottom:1px solid #696969;box-shadow:inset -1px -1px 0 #a0a0a0;"></div>
<svg style="position:absolute;left:597px;top:560px" width="8" height="5" viewBox="0 0 8 5"><path d="M0 0 L8 0 L4 4.5 Z" fill="#000"/></svg>
<div style="position:absolute;left:432px;top:557.49px;font-family:'Liberation Sans', sans-serif;font-size:11px;line-height:11px;color:#000;font-weight:400;white-space:pre;transform:scale(0.96,1);transform-origin:left 84.7%;">All Drugs</div>
<div style="position:absolute;left:619px;top:552px;width:181px;height:20px;background:#fff;border-top:1px solid #a0a0a0;border-left:1px solid #a0a0a0;border-right:1px solid #fff;border-bottom:1px solid #fff;box-shadow:inset 1px 1px 0 #696969, inset -1px -1px 0 #e3e3e3;"></div>
<div style="position:absolute;left:783px;top:554px;width:16px;height:16px;background:#f0f0f0;border-top:1px solid #fff;border-left:1px solid #fff;border-right:1px solid #696969;border-bottom:1px solid #696969;box-shadow:inset -1px -1px 0 #a0a0a0;"></div>
<svg style="position:absolute;left:787px;top:560px" width="8" height="5" viewBox="0 0 8 5"><path d="M0 0 L8 0 L4 4.5 Z" fill="#000"/></svg>
<div style="position:absolute;left:626.3px;top:557.49px;font-family:'Liberation Sans', sans-serif;font-size:11px;line-height:11px;color:#000;font-weight:400;white-space:pre;transform:scale(0.96,1);transform-origin:left 84.7%;">All Physicians</div>
<div style="position:absolute;left:0px;top:614px;width:5px;height:1px;background:#cfcfcf;"></div>
<div style="position:absolute;left:23.1px;top:587.27px;font-family:'Liberation Sans', sans-serif;font-size:13.5px;line-height:13.5px;color:#000080;font-weight:700;white-space:pre;">Action:</div>
<div style="position:absolute;left:73px;top:584px;width:14px;height:19px;background:#fff;border-top:1px solid #a0a0a0;border-left:1px solid #a0a0a0;border-right:1px solid #fff;border-bottom:1px solid #fff;box-shadow:inset 1px 1px 0 #696969, inset -1px -1px 0 #e3e3e3;"></div>
<div style="position:absolute;left:76.5px;top:591.25px;font-family:'Liberation Mono', monospace;font-size:10.5px;line-height:10.5px;color:#000;font-weight:700;white-space:pre;transform:scale(1,1.3);transform-origin:left 69.0%;">M</div>
<div style="position:absolute;left:98.3px;top:587.27px;font-family:'Liberation Sans', sans-serif;font-size:13.5px;line-height:13.5px;color:#000080;font-weight:700;white-space:pre;">Line #:</div>
<div style="position:absolute;left:146px;top:584px;width:30px;height:19px;background:#fff;border-top:1px solid #a0a0a0;border-left:1px solid #a0a0a0;border-right:1px solid #fff;border-bottom:1px solid #fff;box-shadow:inset 1px 1px 0 #696969, inset -1px -1px 0 #e3e3e3;"></div>
<div style="position:absolute;left:149.5px;top:590.22px;font-family:'Liberation Mono', monospace;font-size:12px;line-height:12px;color:#000;font-weight:700;white-space:pre;transform:scale(1,1.2);transform-origin:left 69.0%;">3</div>
<div style="position:absolute;left:187.5px;top:587.44px;font-family:'Liberation Sans', sans-serif;font-size:13.3px;line-height:13.3px;color:#000080;font-weight:700;white-space:pre;">Refill #:</div>
<div style="position:absolute;left:239px;top:584px;width:22px;height:19px;background:#c4c4c4;border-top:1px solid #a0a0a0;border-left:1px solid #a0a0a0;border-right:1px solid #fff;border-bottom:1px solid #fff;box-shadow:inset 1px 1px 0 #696969, inset -1px -1px 0 #e3e3e3;"></div>
<svg style="position:absolute;left:268px;top:592px" width="5" height="5" viewBox="0 0 5 5"><path d="M0 0 L4.5 0 L0 4.5 Z" fill="#6a6a6a"/></svg>
<div style="position:absolute;left:282.5px;top:588.48px;font-family:'Liberation Sans', sans-serif;font-size:11.6px;line-height:11.6px;color:#000;font-weight:700;white-space:pre;">(Actions: New, Capt, Refill, Modify, Discontinue, Expand, Transmit, Status)</div>
<div style="position:absolute;left:717px;top:583px;width:75px;height:24px;background:#f0f0f0;border-top:1px solid #fff;border-left:1px solid #fff;border-right:1px solid #696969;border-bottom:1px solid #696969;box-shadow:inset -1px -1px 0 #a0a0a0;"></div>
<div style="position:absolute;left:741.8px;top:588.51px;font-family:'Liberation Sans', sans-serif;font-size:10.5px;line-height:10.5px;color:#000;font-weight:400;white-space:pre;">Close</div>
</body></html>
